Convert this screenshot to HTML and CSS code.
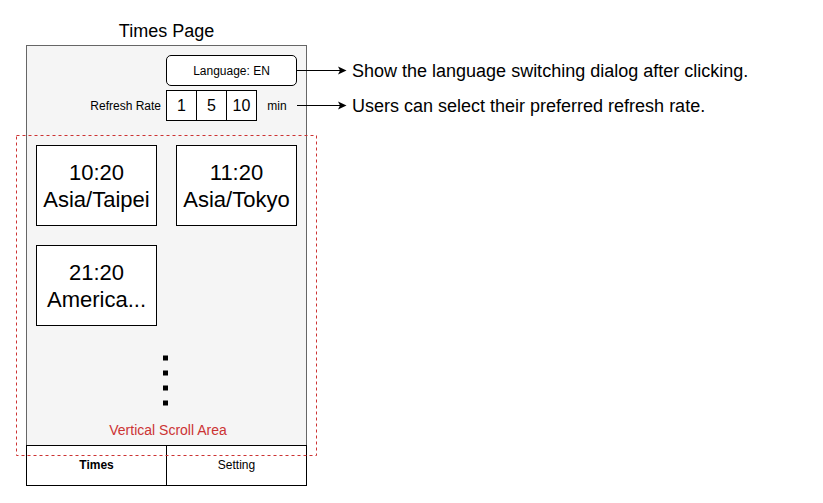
FILE: index.html
```html
<!DOCTYPE html>
<html lang="en">
<head>
<meta charset="utf-8">
<meta name="viewport" content="width=device-width, initial-scale=1">
<title>Times Page</title>
<link rel="stylesheet" href="styles.css">
</head>
<body>
<main class="wireframe">
  <section class="screen">
    <h1 class="screen-title">Times Page</h1>
    <div class="panel">
      <header class="controls">
        <button class="language" type="button">Language: EN</button>
        <div class="refresh" role="group" aria-labelledby="refresh-label">
          <span class="refresh-label" id="refresh-label">Refresh Rate</span>
          <div class="segments">
            <button class="segment" type="button">1</button>
            <button class="segment" type="button">5</button>
            <button class="segment" type="button">10</button>
          </div>
          <span class="unit">min</span>
        </div>
      </header>
      <section class="scroll-area">
        <svg class="outline" aria-hidden="true"><rect class="outline-rect" x="0.5" y="0.5"/></svg>
        <div class="cards">
          <article class="card"><span>10:20</span><span>Asia/Taipei</span></article>
          <article class="card"><span>11:20</span><span>Asia/Tokyo</span></article>
          <article class="card"><span>21:20</span><span>America...</span></article>
        </div>
        <svg class="dots" viewBox="0 0 5 51" aria-hidden="true"><path d="M2.5 0.5V50.5" stroke="#000" stroke-width="5" stroke-dasharray="5 10"/></svg>
        <p class="scroll-label">Vertical Scroll Area</p>
      </section>
      <nav class="tabs">
        <a class="tab tab-active" href="#times">Times</a>
        <a class="tab" href="#setting">Setting</a>
      </nav>
    </div>
  </section>
  <aside class="notes">
    <p class="note">
      <svg class="arrow" viewBox="0 0 50 9" aria-hidden="true"><path d="M0 4.5H44" stroke="#000"/><path d="M49.5 4.5L41 8.5L43 4.5L41 0.5Z"/></svg>
      <span>Show the language switching dialog after clicking.</span>
    </p>
    <p class="note">
      <svg class="arrow" viewBox="0 0 50 9" aria-hidden="true"><path d="M0 4.5H44" stroke="#000"/><path d="M49.5 4.5L41 8.5L43 4.5L41 0.5Z"/></svg>
      <span>Users can select their preferred refresh rate.</span>
    </p>
  </aside>
</main>
</body>
</html>
```
FILE: styles.css
```css
* {
  box-sizing: border-box;
}

body {
  margin: 0;
  padding: 17px 26px;
  background: #fff;
  color: #000;
  font: 12px/16px "Liberation Sans", Arial, Helvetica, sans-serif;
}

h1,
p {
  margin: 0;
}

button {
  padding: 0;
  border: 1px solid #000;
  background: #fff;
  color: inherit;
  font: inherit;
}

.wireframe {
  display: flex;
  align-items: flex-start;
}

.screen {
  flex: none;
}

.screen-title {
  font-size: 18px;
  line-height: 28px;
  font-weight: 400;
  text-align: center;
}

.panel {
  border: 1px solid #666;
  border-bottom: 0;
  background: #f5f5f5;
}

.controls {
  display: flex;
  flex-direction: column;
  align-items: flex-end;
  gap: 4px;
  padding: 9px 9px 14px;
}

.language {
  width: 131px;
  height: 31px;
  border-radius: 5px;
}

.refresh {
  display: flex;
  align-items: center;
}

.refresh-label {
  padding-right: 5px;
}

.segments {
  display: flex;
}

.segment {
  width: 31px;
  height: 31px;
  font-size: 16px;
}

.segment + .segment {
  margin-left: -1px;
}

.unit {
  width: 40px;
  text-align: center;
}

.scroll-area {
  position: relative;
  display: flex;
  flex-direction: column;
  align-items: center;
  margin: 0 -11px -11px;
  padding: 10px 20px 16px;
}

.outline {
  position: absolute;
  z-index: 1;
  inset: 0;
  width: 100%;
  height: 100%;
  pointer-events: none;
}

.outline-rect {
  width: calc(100% - 1px);
  height: calc(100% - 1px);
  fill: none;
  stroke: #cc3333;
  stroke-dasharray: 3 3;
}

.cards {
  display: grid;
  grid-template-columns: 121px 121px;
  gap: 19px;
}

.card {
  display: flex;
  flex-direction: column;
  align-items: center;
  justify-content: center;
  height: 81px;
  border: 1px solid #000;
  background: #fff;
  font-size: 22px;
  line-height: 27px;
}

.dots {
  width: 5px;
  height: 51px;
  margin: 29px 2px 14px 0;
}

.scroll-label {
  padding-left: 3px;
  color: #cc3333;
  font-size: 14px;
  line-height: 20px;
}

.tabs {
  display: flex;
  margin: 0 -1px;
  border: 1px solid #000;
  background: #fff;
}

.tab {
  flex: 1;
  height: 39px;
  color: inherit;
  line-height: 39px;
  text-align: center;
  text-decoration: none;
}

.tab + .tab {
  border-left: 1px solid #000;
}

.tab-active {
  font-weight: 700;
}

.notes {
  z-index: 1;
  margin: 36px 0 0 -10px;
}

.note {
  display: flex;
  align-items: center;
  gap: 5px;
  min-height: 35px;
  font-size: 18px;
  line-height: 22px;
}

.arrow {
  flex: none;
  width: 50px;
  height: 9px;
}
```
